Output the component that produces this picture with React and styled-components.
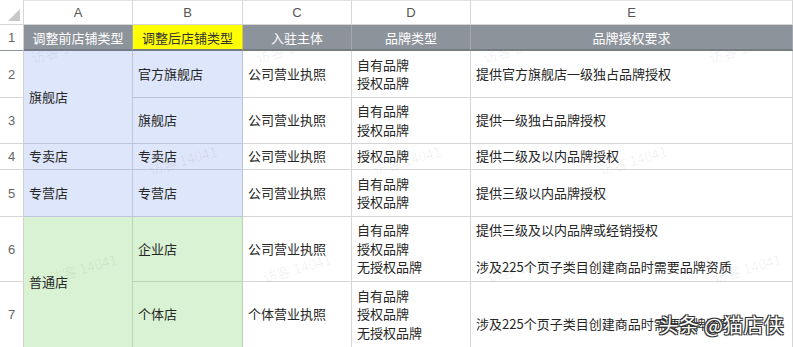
import React from 'react'
import styled, { createGlobalStyle, css } from 'styled-components'

const GlobalStyle = createGlobalStyle`
  html, body {
    margin: 0;
    padding: 0;
    background: #fff;
  }
  body {
    font-family: "Noto Sans CJK SC", "Noto Sans", sans-serif;
    color: #262626;
  }
`

const tones = {
  plain: { bg: '#ffffff', line: '#d6d6d6' },
  blue: { bg: '#dee6fc', line: '#bcc5da' },
  green: { bg: '#d9f2d3', line: '#b9d4b3' },
  head: { bg: '#8d939b', line: '#a3a8ae' },
  yellow: { bg: '#ffff00', line: '#c9c94a' },
}

const Sheet = styled.div`
  position: relative;
  width: 793px;
  height: 347px;
  overflow: hidden;
  display: grid;
  grid-template-columns: 24px 109px 110px 109px 119px 322px;
  grid-template-rows: 25px 26px 47px 46px 26px 47px 65px 66px;
`

const Corner = styled.div`
  position: relative;
  z-index: 2;
  box-sizing: border-box;
  border-right: 1px solid #d6d6d6;
  border-bottom: 1px solid #d6d6d6;
  background: #fff;

  &::after {
    content: "";
    position: absolute;
    right: 3px;
    bottom: 3px;
    width: 0;
    height: 0;
    border-left: 12px solid transparent;
    border-bottom: 12px solid #c8c8c8;
  }
`

const ColLetter = styled.div`
  position: relative;
  z-index: 2;
  box-sizing: border-box;
  display: flex;
  align-items: center;
  justify-content: center;
  background: #fff;
  border-right: 1px solid #d6d6d6;
  border-bottom: 1px solid #d6d6d6;
  border-top: 1px solid #e2e2e2;
  font-family: "Liberation Sans", Arial, sans-serif;
  font-size: 13px;
  color: #555;
`

const RowNum = styled.div`
  box-sizing: border-box;
  display: flex;
  align-items: center;
  justify-content: center;
  border-right: 1px solid #d0d0d0;
  border-bottom: 1px solid #d6d6d6;
  font-family: "Liberation Sans", Arial, sans-serif;
  font-size: 13px;
  color: #666;
  background: #fff;
  ${(p) =>
    p.$head &&
    css`
      position: relative;
      z-index: 2;
      border-bottom-color: #8d939b;
    `}
`

const HeadCell = styled.div`
  position: relative;
  z-index: 2;
  box-sizing: border-box;
  display: flex;
  align-items: center;
  justify-content: center;
  background: ${(p) => tones[p.$tone].bg};
  border-right: 1px solid ${(p) => tones[p.$tone].line};
  border-bottom: 2px solid #767c84;
  color: ${(p) => (p.$tone === 'yellow' ? '#333' : '#fff')};
  font-size: 13px;
  padding-top: 1px;
`

const Cell = styled.div`
  box-sizing: border-box;
  display: flex;
  align-items: center;
  padding: 0 5px;
  background: ${(p) => tones[p.$tone || 'plain'].bg};
  border-right: 1px solid ${(p) => tones[p.$tone || 'plain'].line};
  border-bottom: 1px solid ${(p) => tones[p.$tone || 'plain'].line};
  font-size: 13px;
  line-height: 18.5px;
  white-space: pre-line;
  ${(p) => p.$span && css`grid-row: span ${p.$span};`}
`

const Mark = styled.div`
  position: absolute;
  z-index: 1;
  left: ${(p) => p.$x}px;
  top: ${(p) => p.$y}px;
  transform: rotate(-16deg);
  font-size: 14px;
  color: rgba(0, 0, 0, 0.065);
  white-space: nowrap;
  pointer-events: none;
`

const Stamp = styled.div`
  position: absolute;
  z-index: 3;
  right: 9px;
  bottom: 8px;
  font-size: 20px;
  color: #fff;
  letter-spacing: 0.3px;
  text-shadow:
    -1px -1px 0 #333, 1px -1px 0 #333, -1px 1px 0 #333, 1px 1px 0 #333,
    0 0 2px #000;
  pointer-events: none;
`

const rows = [
  { n: 2, a: { text: '旗舰店', span: 2, tone: 'blue' }, b: '官方旗舰店', bt: 'blue', c: '公司营业执照', d: '自有品牌\n授权品牌', e: '提供官方旗舰店一级独占品牌授权' },
  { n: 3, b: '旗舰店', bt: 'blue', c: '公司营业执照', d: '自有品牌\n授权品牌', e: '提供一级独占品牌授权' },
  { n: 4, a: { text: '专卖店', tone: 'blue' }, b: '专卖店', bt: 'blue', c: '公司营业执照', d: '授权品牌', e: '提供二级及以内品牌授权' },
  { n: 5, a: { text: '专营店', tone: 'blue' }, b: '专营店', bt: 'blue', c: '公司营业执照', d: '自有品牌\n授权品牌', e: '提供三级以内品牌授权' },
  { n: 6, a: { text: '普通店', span: 2, tone: 'green' }, b: '企业店', bt: 'green', c: '公司营业执照', d: '自有品牌\n授权品牌\n无授权品牌', e: '提供三级及以内品牌或经销授权\n\n涉及225个页子类目创建商品时需要品牌资质' },
  { n: 7, b: '个体店', bt: 'green', c: '个体营业执照', d: '自有品牌\n授权品牌\n无授权品牌', e: '\n涉及225个页子类目创建商品时需要品牌资质' },
]

const marks = [
  [30, 38], [255, 38], [482, 38], [708, 38],
  [148, 150], [372, 150], [598, 150],
  [48, 258], [262, 258], [486, 258], [712, 258],
]

export default function App() {
  return (
    <>
      <GlobalStyle />
      <Sheet>
        <Corner />
        {['A', 'B', 'C', 'D', 'E'].map((l) => (
          <ColLetter key={l}>{l}</ColLetter>
        ))}

        <RowNum $head>1</RowNum>
        <HeadCell $tone="head">调整前店铺类型</HeadCell>
        <HeadCell $tone="yellow">调整后店铺类型</HeadCell>
        <HeadCell $tone="head">入驻主体</HeadCell>
        <HeadCell $tone="head">品牌类型</HeadCell>
        <HeadCell $tone="head">品牌授权要求</HeadCell>

        {rows.map((r) => (
          <React.Fragment key={r.n}>
            <RowNum>{r.n}</RowNum>
            {r.a && (
              <Cell $tone={r.a.tone} $span={r.a.span}>{r.a.text}</Cell>
            )}
            <Cell $tone={r.bt}>{r.b}</Cell>
            <Cell>{r.c}</Cell>
            <Cell>{r.d}</Cell>
            <Cell>{r.e}</Cell>
          </React.Fragment>
        ))}

        {marks.map(([x, y], i) => (
          <Mark key={i} $x={x} $y={y}>访客 14041</Mark>
        ))}
        <Stamp>头条 @猫店侠</Stamp>
      </Sheet>
    </>
  )
}
